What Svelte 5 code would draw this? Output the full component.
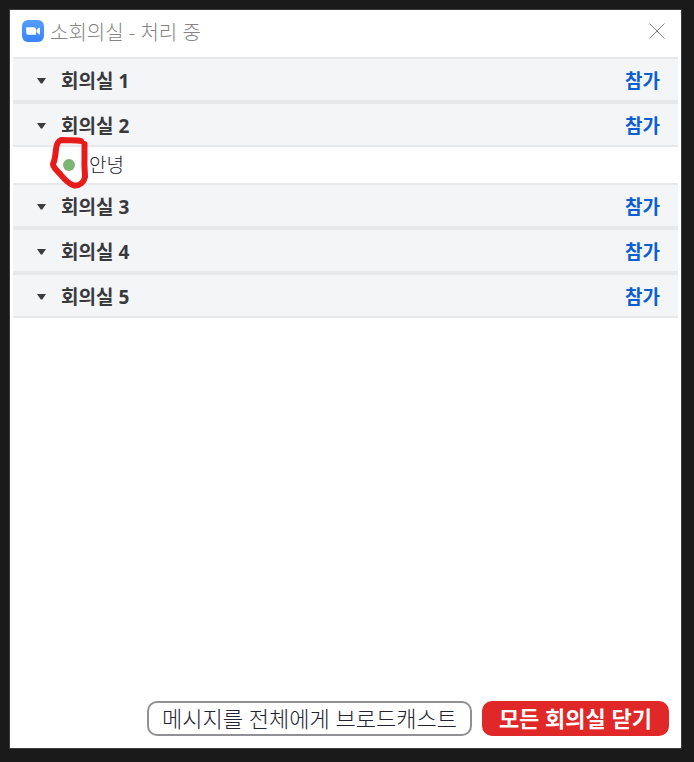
<script lang="ts">
	type Room = {
		id: number;
		name: string;
		members: string[];
	};

	let rooms: Room[] = [
		{ id: 1, name: '회의실 1', members: [] },
		{ id: 2, name: '회의실 2', members: ['안녕'] },
		{ id: 3, name: '회의실 3', members: [] },
		{ id: 4, name: '회의실 4', members: [] },
		{ id: 5, name: '회의실 5', members: [] }
	];

	let collapsed: Record<number, boolean> = {};

	function toggle(id: number) {
		collapsed[id] = !collapsed[id];
	}
</script>

<div class="desktop">
	<main class="window">
		<header class="titlebar">
			<svg class="logo" viewBox="0 0 22 22" aria-hidden="true">
				<defs>
					<linearGradient id="logo-fill" x1="0" y1="0" x2="0" y2="1">
						<stop offset="0" stop-color="#559dfc" />
						<stop offset="1" stop-color="#3a83fa" />
					</linearGradient>
				</defs>
				<rect width="22" height="22" rx="6" fill="url(#logo-fill)" />
				<path
					d="M4.2 7.3h7.6a2.2 2.2 0 0 1 2.2 2.2v5.2H6.4a2.2 2.2 0 0 1-2.2-2.2zM14.6 9.8l2.4-2c.5-.4 1-.3 1 .3v5.8c0 .6-.5.7-1 .3l-2.4-2z"
					fill="#fff"
				/>
			</svg>
			<h1>소회의실 - 처리 중</h1>
			<button class="close" type="button" aria-label="닫기">
				<svg viewBox="0 0 16 16" aria-hidden="true">
					<path d="M.5.5l15 15M15.5.5l-15 15" stroke="#858585" stroke-width="1" />
				</svg>
			</button>
		</header>

		<ul class="rooms">
			{#each rooms as room (room.id)}
				<li>
					<div class="room">
						<button
							class="room-toggle"
							type="button"
							aria-expanded={!collapsed[room.id]}
							on:click={() => toggle(room.id)}
						>
							<svg class="arrow" class:closed={collapsed[room.id]} viewBox="0 0 9 6" aria-hidden="true">
								<path d="M0 0h9L5.2 5.6H3.8z" fill="#3b3c40" />
							</svg>
							<span>{room.name}</span>
						</button>
						<button class="join" type="button">참가</button>
					</div>
					{#if room.members.length > 0 && !collapsed[room.id]}
						<ul class="members">
							{#each room.members as member}
								<li class="member">
									<span class="status">
										<!-- hand-drawn marker ring over the status dot -->
										<svg class="marker" viewBox="0 0 40 54" aria-hidden="true">
											<path
												d="M32 5C28 3.5 20 4.5 12 4C9 5 7.5 9 7 13C6.5 19 6 24 4 28C4 32 9 35 12 39C16 44 20 48 25 49.5C31 50 35 46 36 41C36 35 35 30 35.5 24L35.5 8"
												fill="none"
												stroke="#e81b1b"
												stroke-width="6"
												stroke-linecap="round"
												stroke-linejoin="round"
											/>
										</svg>
									</span>
									<span>{member}</span>
								</li>
							{/each}
						</ul>
					{/if}
				</li>
			{/each}
		</ul>

		<footer class="actions">
			<button class="btn" type="button">메시지를 전체에게 브로드캐스트</button>
			<button class="btn danger" type="button">모든 회의실 닫기</button>
		</footer>
	</main>
</div>

<style>
	:global(body) {
		background: #1a1a1a;
	}

	.desktop {
		display: flex;
		min-height: 100vh;
		box-sizing: border-box;
		padding: 9px 12px 13px 9px;
		background: #1a1a1a;
		font-family: 'Open Sans', 'Noto Sans CJK KR', sans-serif;
		font-size: 20px;
		line-height: 28px;
		color: #232333;
	}

	.window {
		flex: 1;
		min-width: 0;
		display: flex;
		flex-direction: column;
		background: #fff;
		border: 1px solid #3c3c3c;
	}

	button {
		font: inherit;
		color: inherit;
		border: none;
		background: none;
		padding: 0;
		cursor: pointer;
	}

	ul {
		list-style: none;
		margin: 0;
		padding: 0;
	}

	.titlebar {
		display: flex;
		align-items: center;
		height: 41px;
		padding: 0 16px 6px 12px;
	}

	.logo {
		width: 22px;
		height: 22px;
	}

	h1 {
		flex: 1;
		margin: 0 0 0 6px;
		padding-top: 4px;
		font-size: 20px;
		font-weight: 300;
		color: #848484;
	}

	.close {
		display: flex;
	}

	.close svg {
		width: 16px;
		height: 16px;
	}

	.rooms {
		flex: 1;
		padding: 0 3px;
	}

	.room {
		display: flex;
		align-items: center;
		justify-content: space-between;
		height: 39px;
		padding: 2px 18px 0 24px;
		background: #f4f5f7;
		border-top: 2px solid #e7e8ea;
		border-bottom: 2px solid #e7e8ea;
		font-size: 19px;
		font-weight: 700;
	}

	.room-toggle {
		display: flex;
		align-items: center;
		gap: 15px;
		color: #38393d;
	}

	.arrow {
		width: 9px;
		height: 6px;
	}

	.arrow.closed {
		transform: rotate(-90deg);
	}

	.join {
		color: #0b5fd0;
	}

	.member {
		display: flex;
		align-items: center;
		gap: 14px;
		height: 36px;
		padding-left: 50px;
		font-size: 19px;
		font-weight: 300;
	}

	.status {
		position: relative;
		width: 12px;
		height: 12px;
		border-radius: 50%;
		background: #7ab574;
	}

	.marker {
		position: absolute;
		top: -23px;
		left: -14px;
		width: 40px;
		height: 54px;
	}

	.actions {
		display: flex;
		flex-wrap: wrap;
		justify-content: flex-end;
		gap: 10px;
		padding: 12px;
	}

	.btn {
		height: 35px;
		padding: 0 13px 2px;
		border: 2px solid #909096;
		border-radius: 10px;
		background: #fff;
		font-size: 22px;
		font-weight: 300;
		line-height: 28px;
	}

	.btn.danger {
		padding: 0 15px 2px;
		border-color: #e02828;
		background: #e02828;
		color: #fff;
		font-weight: 700;
	}
</style>
